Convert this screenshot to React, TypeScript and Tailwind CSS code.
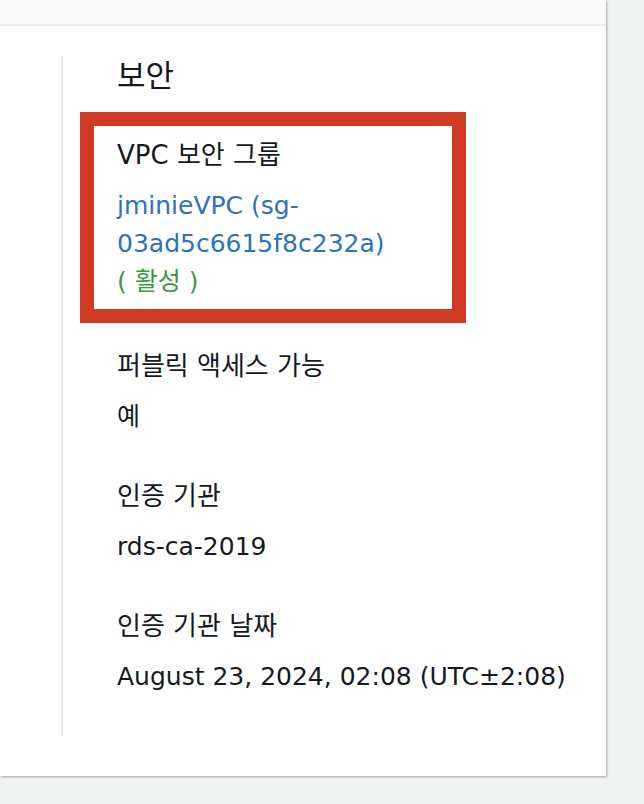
import React from "react";

const FONT = { fontFamily: '"DejaVu Sans", "Noto Sans CJK KR", sans-serif' };

function Field({ label, children }: { label: string; children: React.ReactNode }) {
  return (
    <div className="flex flex-col gap-[13px]">
      <div className="text-[26px] leading-[38px] text-[#16191f]">{label}</div>
      <div className="text-[25px] leading-[38px] text-[#16191f]">{children}</div>
    </div>
  );
}

export default function App() {
  return (
    <div className="min-h-[804px] w-[644px] bg-[#f2f3f3]" style={FONT}>
      <div className="w-[606px] h-[776px] bg-white shadow-[1px_1px_2px_rgba(0,28,36,0.35)] flex flex-col">
        <div className="h-[26px] bg-[#fafafa] border-b-2 border-[#eaeded] shrink-0" />
        <div className="flex pt-[30px]">
          <div className="ml-[61px] w-[2px] h-[680px] bg-[#eaeded]" />
          <div className="pl-[54px] flex flex-col">
            <h2 className="text-[31px] leading-[40px] font-normal text-[#16191f]">보안</h2>

            <div className="relative mt-[40px]">
              <div className="pointer-events-none absolute -left-[37px] -top-[24px] w-[386px] h-[211px] border-[14px] border-[#d13a23]" />
              <Field label="VPC 보안 그룹">
                <div className="text-[#2e72b8] w-[300px]">
                  <div>jminieVPC (sg-</div>
                  <div>03ad5c6615f8c232a)</div>
                </div>
                <div className="text-[#3a9a3c]">( 활성 )</div>
              </Field>
            </div>

            <div className="mt-[46px] flex flex-col gap-[41px]">
              <Field label="퍼블릭 액세스 가능">예</Field>
              <Field label="인증 기관">rds-ca-2019</Field>
              <Field label="인증 기관 날짜">August 23, 2024, 02:08 (UTC±2:08)</Field>
            </div>
          </div>
        </div>
      </div>
    </div>
  );
}
